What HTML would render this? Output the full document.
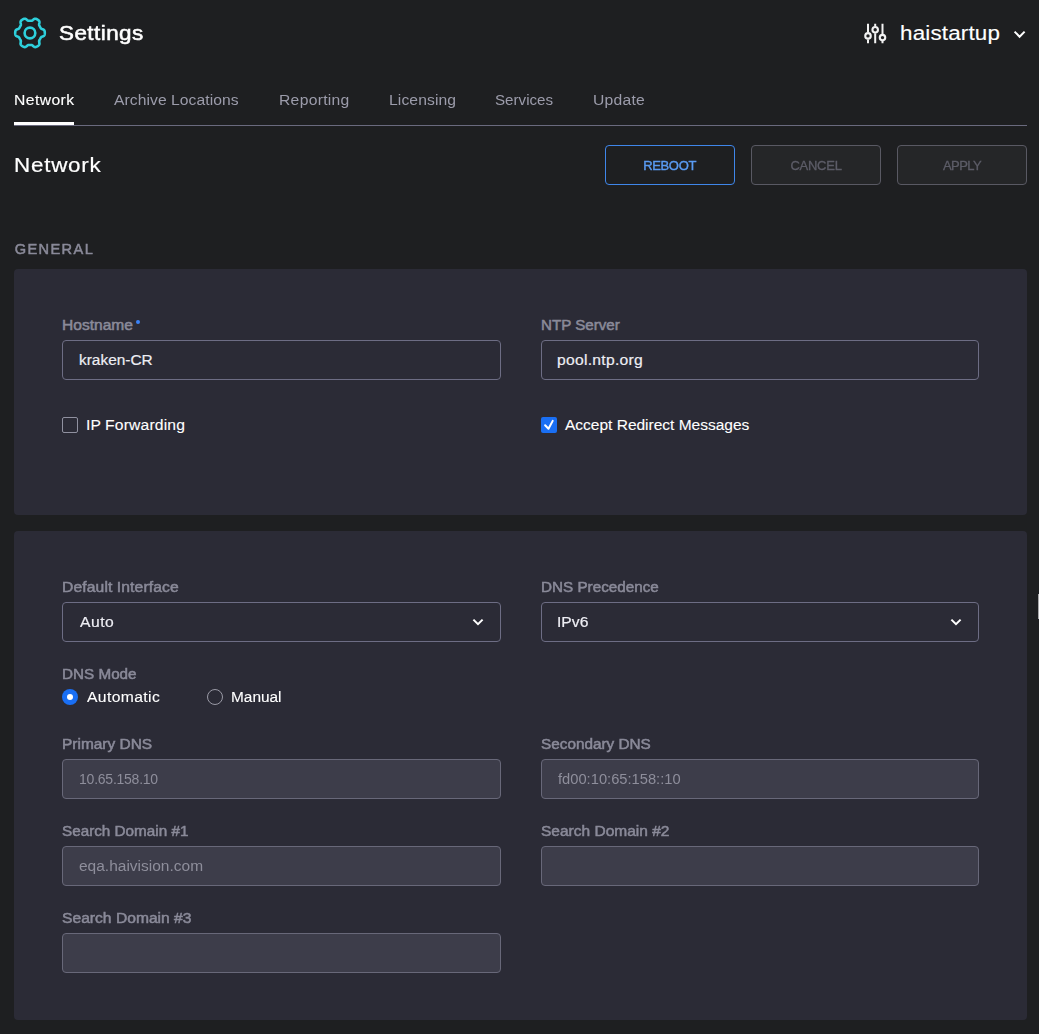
<!DOCTYPE html><html lang='en'><head><meta charset='utf-8'><title>Settings - Network</title><style>
*{box-sizing:border-box;margin:0;padding:0}
html,body{width:1039px;height:1034px;overflow:hidden;background:#1e1f21}
body{position:relative;font-family:"Liberation Sans",sans-serif;color:#fff}
.t{position:absolute;white-space:pre;transform-origin:0 0;display:block}
.panel{position:absolute;left:14px;width:1013px;background:#2b2b36;border-radius:4px}
.inp{position:absolute;height:40px;border:1px solid #6d6d84;border-radius:4px;background:#2b2b36}
.inp.dis{background:#3d3d4a;border-color:#686879}
.l{left:62px;width:439px} .r{left:541px;width:438px}
.btn{position:absolute;top:145px;width:130px;height:40px;border-radius:4px;border:1px solid #595963;background:#252628}
.btn.pri{border-color:#3f86ea;background:#1e1f21}
.cb{position:absolute;width:16px;height:16px;border-radius:2px;border:1px solid #9091a0;background:#2b2b36}
.cb.on{border:0;background:#1a6ff4}
.rd{position:absolute;width:16px;height:16px;border-radius:50%;border:1px solid #9a9aa6;background:#2b2b36}
.rd.on{border:0;background:#1a6ff4}
.rd.on:after{content:"";position:absolute;left:5px;top:5px;width:6px;height:6px;border-radius:50%;background:#fff}
svg{position:absolute;overflow:visible}
.gl{position:absolute;left:0;top:0;width:1039px;height:1034px;will-change:transform}
</style></head><body>
<svg width='1039' height='70' style='left:0;top:0' viewBox='0 0 1039 70' fill='none'><path d='M44.80 32.90 L44.80 32.63 L44.79 32.36 L44.77 32.09 L44.74 31.82 L44.70 31.56 L44.65 31.29 L44.59 31.03 L44.50 30.77 L44.39 30.52 L44.24 30.28 L44.05 30.05 L43.80 29.83 L43.50 29.64 L43.14 29.48 L42.75 29.33 L42.36 29.20 L42.00 29.07 L41.69 28.93 L41.43 28.79 L41.22 28.63 L41.04 28.47 L40.90 28.30 L40.77 28.12 L40.66 27.94 L40.55 27.76 L40.45 27.58 L40.35 27.39 L40.25 27.21 L40.15 27.02 L40.05 26.84 L39.94 26.66 L39.84 26.47 L39.74 26.29 L39.64 26.11 L39.54 25.92 L39.44 25.73 L39.35 25.54 L39.26 25.34 L39.19 25.12 L39.14 24.88 L39.12 24.61 L39.13 24.31 L39.18 23.96 L39.25 23.57 L39.33 23.15 L39.41 22.72 L39.45 22.31 L39.44 21.94 L39.39 21.61 L39.30 21.32 L39.17 21.07 L39.02 20.84 L38.85 20.63 L38.66 20.44 L38.47 20.27 L38.26 20.10 L38.05 19.94 L37.84 19.79 L37.62 19.64 L37.40 19.51 L37.17 19.37 L36.95 19.25 L36.71 19.13 L36.48 19.02 L36.24 18.92 L35.99 18.83 L35.74 18.76 L35.49 18.71 L35.22 18.68 L34.95 18.70 L34.66 18.76 L34.36 18.87 L34.05 19.06 L33.73 19.30 L33.42 19.58 L33.11 19.86 L32.82 20.12 L32.55 20.34 L32.31 20.50 L32.07 20.62 L31.85 20.69 L31.64 20.74 L31.43 20.76 L31.22 20.78 L31.01 20.78 L30.81 20.78 L30.61 20.78 L30.41 20.78 L30.20 20.78 L30.00 20.78 L29.80 20.78 L29.59 20.78 L29.39 20.78 L29.19 20.78 L28.99 20.78 L28.78 20.78 L28.57 20.76 L28.36 20.74 L28.15 20.69 L27.93 20.62 L27.69 20.50 L27.45 20.34 L27.18 20.12 L26.89 19.86 L26.58 19.58 L26.27 19.30 L25.95 19.06 L25.64 18.87 L25.34 18.76 L25.05 18.70 L24.78 18.68 L24.51 18.71 L24.26 18.76 L24.01 18.83 L23.76 18.92 L23.52 19.02 L23.29 19.13 L23.05 19.25 L22.83 19.37 L22.60 19.51 L22.38 19.64 L22.16 19.79 L21.95 19.94 L21.74 20.10 L21.53 20.27 L21.34 20.44 L21.15 20.63 L20.98 20.84 L20.83 21.07 L20.70 21.32 L20.61 21.61 L20.56 21.94 L20.55 22.31 L20.59 22.72 L20.67 23.15 L20.75 23.57 L20.82 23.96 L20.87 24.31 L20.88 24.61 L20.86 24.88 L20.81 25.12 L20.74 25.34 L20.65 25.54 L20.56 25.73 L20.46 25.92 L20.36 26.11 L20.26 26.29 L20.16 26.47 L20.06 26.66 L19.95 26.84 L19.85 27.02 L19.75 27.21 L19.65 27.39 L19.55 27.58 L19.45 27.76 L19.34 27.94 L19.23 28.12 L19.10 28.30 L18.96 28.47 L18.78 28.63 L18.57 28.79 L18.31 28.93 L18.00 29.07 L17.64 29.20 L17.25 29.33 L16.86 29.48 L16.50 29.64 L16.20 29.83 L15.95 30.05 L15.76 30.28 L15.61 30.52 L15.50 30.77 L15.41 31.03 L15.35 31.29 L15.30 31.56 L15.26 31.82 L15.23 32.09 L15.21 32.36 L15.20 32.63 L15.20 32.90 L15.20 33.17 L15.21 33.44 L15.23 33.71 L15.26 33.98 L15.30 34.24 L15.35 34.51 L15.41 34.77 L15.50 35.03 L15.61 35.28 L15.76 35.52 L15.95 35.75 L16.20 35.97 L16.50 36.16 L16.86 36.32 L17.25 36.47 L17.64 36.60 L18.00 36.73 L18.31 36.87 L18.57 37.01 L18.78 37.17 L18.96 37.33 L19.10 37.50 L19.23 37.68 L19.34 37.86 L19.45 38.04 L19.55 38.22 L19.65 38.41 L19.75 38.59 L19.85 38.78 L19.95 38.96 L20.06 39.14 L20.16 39.33 L20.26 39.51 L20.36 39.69 L20.46 39.88 L20.56 40.07 L20.65 40.26 L20.74 40.46 L20.81 40.68 L20.86 40.92 L20.88 41.19 L20.87 41.49 L20.82 41.84 L20.75 42.23 L20.67 42.65 L20.59 43.08 L20.55 43.49 L20.56 43.86 L20.61 44.19 L20.70 44.48 L20.83 44.73 L20.98 44.96 L21.15 45.17 L21.34 45.36 L21.53 45.53 L21.74 45.70 L21.95 45.86 L22.16 46.01 L22.38 46.16 L22.60 46.29 L22.83 46.43 L23.05 46.55 L23.29 46.67 L23.52 46.78 L23.76 46.88 L24.01 46.97 L24.26 47.04 L24.51 47.09 L24.78 47.12 L25.05 47.10 L25.34 47.04 L25.64 46.93 L25.95 46.74 L26.27 46.50 L26.58 46.22 L26.89 45.94 L27.18 45.68 L27.45 45.46 L27.69 45.30 L27.93 45.18 L28.15 45.11 L28.36 45.06 L28.57 45.04 L28.78 45.02 L28.99 45.02 L29.19 45.02 L29.39 45.02 L29.59 45.02 L29.80 45.02 L30.00 45.02 L30.20 45.02 L30.41 45.02 L30.61 45.02 L30.81 45.02 L31.01 45.02 L31.22 45.02 L31.43 45.04 L31.64 45.06 L31.85 45.11 L32.07 45.18 L32.31 45.30 L32.55 45.46 L32.82 45.68 L33.11 45.94 L33.42 46.22 L33.73 46.50 L34.05 46.74 L34.36 46.93 L34.66 47.04 L34.95 47.10 L35.22 47.12 L35.49 47.09 L35.74 47.04 L35.99 46.97 L36.24 46.88 L36.48 46.78 L36.71 46.67 L36.95 46.55 L37.17 46.43 L37.40 46.29 L37.62 46.16 L37.84 46.01 L38.05 45.86 L38.26 45.70 L38.47 45.53 L38.66 45.36 L38.85 45.17 L39.02 44.96 L39.17 44.73 L39.30 44.48 L39.39 44.19 L39.44 43.86 L39.45 43.49 L39.41 43.08 L39.33 42.65 L39.25 42.23 L39.18 41.84 L39.13 41.49 L39.12 41.19 L39.14 40.92 L39.19 40.68 L39.26 40.46 L39.35 40.26 L39.44 40.07 L39.54 39.88 L39.64 39.69 L39.74 39.51 L39.84 39.33 L39.94 39.14 L40.05 38.96 L40.15 38.78 L40.25 38.59 L40.35 38.41 L40.45 38.22 L40.55 38.04 L40.66 37.86 L40.77 37.68 L40.90 37.50 L41.04 37.33 L41.22 37.17 L41.43 37.01 L41.69 36.87 L42.00 36.73 L42.36 36.60 L42.75 36.47 L43.14 36.32 L43.50 36.16 L43.80 35.97 L44.05 35.75 L44.24 35.52 L44.39 35.28 L44.50 35.03 L44.59 34.77 L44.65 34.51 L44.70 34.24 L44.74 33.98 L44.77 33.71 L44.79 33.44 L44.80 33.17 Z' stroke='#2ed0dc' stroke-width='2.6' stroke-linejoin='round'/><circle cx='29.95' cy='33.0' r='5.35' stroke='#2ed0dc' stroke-width='2.6'/><g stroke='#f2f2f2' stroke-width='2' stroke-linecap='butt'><path d='M868 23.7V32.4M868 39.4V43.2M875.2 23.7V26.3M875.2 33.3V43.2M882.5 23.7V34.1M882.5 41.1V43.2'/><circle cx='868' cy='35.9' r='2.75' stroke-width='2.1'/><circle cx='875.2' cy='29.8' r='2.75' stroke-width='2.1'/><circle cx='882.5' cy='37.6' r='2.75' stroke-width='2.1'/></g><path d='M1014.6 31.6L1019.6 36.8L1024.6 31.6' stroke='#fff' stroke-width='2' /></svg>
<div style='position:absolute;left:14px;top:125px;width:1013px;height:1px;background:#6a6a7e'></div>
<div style='position:absolute;left:14px;top:122px;width:60px;height:3px;background:#fff'></div>
<div class='btn pri' style='left:605px'></div><div class='btn' style='left:751px'></div><div class='btn' style='left:897px'></div>
<div class='panel' style='top:269px;height:246px'></div>
<div class='panel' style='top:531px;height:489px'></div>
<div class='inp l' style='top:340px'></div>
<div class='inp r' style='top:340px'></div>
<div class='inp l' style='top:602px'></div>
<div class='inp r' style='top:602px'></div>
<div class='inp dis l' style='top:759px'></div>
<div class='inp dis r' style='top:759px'></div>
<div class='inp dis l' style='top:846px'></div>
<div class='inp dis r' style='top:846px'></div>
<div class='inp dis l' style='top:933px'></div>
<div class='cb' style='left:62px;top:417px'></div><div class='cb on' style='left:541px;top:417px'></div>
<div class='rd on' style='left:62px;top:689px'></div><div class='rd' style='left:207px;top:689px'></div>
<svg width='1039' height='1034' style='left:0;top:0;pointer-events:none' viewBox='0 0 1039 1034' fill='none' stroke='#fff' stroke-width='2'><path d='M473.4 619.6L478 624.2L482.6 619.6'/><path d='M951.4 619.6L956 624.2L960.6 619.6'/><path d='M545.1 425.2L548.5 428.8L552.7 420.9' stroke-width='2' stroke-linecap='round' stroke-linejoin='round'/></svg>
<div style='position:absolute;left:136.4px;top:320.2px;width:3.8px;height:3.8px;border-radius:50%;background:#3b82f6'></div>
<div style='position:absolute;left:1038px;top:594px;width:1px;height:25px;background:#a9a9ab'></div>
<span class='t' style='left:900.33px;top:23px;font-size:20px;line-height:20px;font-weight:400;color:#ffffff;letter-spacing:0.156px;transform:scaleX(1.1200);-webkit-text-stroke:0.15px #ffffff;'>haistartup</span>
<span class='t' style='left:62.10px;top:318px;font-size:14px;line-height:14px;font-weight:400;color:#8a8a99;letter-spacing:-0.000px;transform:scaleX(1.1116);-webkit-text-stroke:0.5px #8a8a99;'>Hostname</span>
<span class='t' style='left:540.74px;top:318px;font-size:14px;line-height:14px;font-weight:400;color:#8a8a99;letter-spacing:0.000px;word-spacing:-0.000px;transform:scaleX(1.0813);-webkit-text-stroke:0.5px #8a8a99;'>NTP Server</span>
<span class='t' style='left:78.83px;top:353px;font-size:14px;line-height:14px;font-weight:400;color:#eeeef4;letter-spacing:0.000px;transform:scaleX(1.1013);-webkit-text-stroke:0.18px #eeeef4;'>kraken-CR</span>
<span class='t' style='left:557.30px;top:353px;font-size:14px;line-height:14px;font-weight:400;color:#eeeef4;letter-spacing:0.233px;transform:scaleX(1.1200);-webkit-text-stroke:0.18px #eeeef4;'>pool.ntp.org</span>
<span class='t' style='left:85.98px;top:418px;font-size:14px;line-height:14px;font-weight:400;color:#ffffff;letter-spacing:0.138px;word-spacing:-0.206px;transform:scaleX(1.1200);-webkit-text-stroke:0.1px #ffffff;'>IP Forwarding</span>
<span class='t' style='left:564.65px;top:418px;font-size:14px;line-height:14px;font-weight:400;color:#ffffff;letter-spacing:0.000px;word-spacing:-0.000px;transform:scaleX(1.1070);-webkit-text-stroke:0.1px #ffffff;'>Accept Redirect Messages</span>
<div class='gl'>
<span class='t' style='left:59.09px;top:23px;font-size:20px;line-height:20px;font-weight:400;color:#ffffff;letter-spacing:0.415px;transform:scaleX(1.1200);-webkit-text-stroke:0.55px #ffffff;'>Settings</span>
<span class='t' style='left:13.70px;top:93px;font-size:14px;line-height:14px;font-weight:400;color:#ffffff;letter-spacing:0.388px;transform:scaleX(1.1200);-webkit-text-stroke:0.12px #ffffff;'>Network</span>
<span class='t' style='left:114.31px;top:93px;font-size:14px;line-height:14px;font-weight:400;color:#9c9cab;letter-spacing:0.050px;word-spacing:-0.075px;transform:scaleX(1.1200);'>Archive Locations</span>
<span class='t' style='left:278.77px;top:93px;font-size:14px;line-height:14px;font-weight:400;color:#9c9cab;letter-spacing:0.263px;transform:scaleX(1.1200);'>Reporting</span>
<span class='t' style='left:388.97px;top:93px;font-size:14px;line-height:14px;font-weight:400;color:#9c9cab;letter-spacing:0.090px;transform:scaleX(1.1200);'>Licensing</span>
<span class='t' style='left:494.72px;top:93px;font-size:14px;line-height:14px;font-weight:400;color:#9c9cab;letter-spacing:0.000px;transform:scaleX(1.0825);'>Services</span>
<span class='t' style='left:593.10px;top:93px;font-size:14px;line-height:14px;font-weight:400;color:#9c9cab;letter-spacing:0.218px;transform:scaleX(1.1200);'>Update</span>
<span class='t' style='left:14.18px;top:155px;font-size:20px;line-height:20px;font-weight:400;color:#ffffff;letter-spacing:0.675px;transform:scaleX(1.1200);-webkit-text-stroke:0.2px #ffffff;'>Network</span>
<span class='t' style='left:643.14px;top:159px;font-size:13px;line-height:13px;font-weight:400;color:#5a9bf2;letter-spacing:-0.329px;-webkit-text-stroke:0.4px #5a9bf2;'>REBOOT</span>
<span class='t' style='left:790.43px;top:159px;font-size:13px;line-height:13px;font-weight:400;color:#5d5d68;letter-spacing:-0.260px;-webkit-text-stroke:0.3px #5d5d68;'>CANCEL</span>
<span class='t' style='left:942.95px;top:159px;font-size:13px;line-height:13px;font-weight:400;color:#5d5d68;letter-spacing:-0.553px;-webkit-text-stroke:0.3px #5d5d68;'>APPLY</span>
<span class='t' style='left:14.75px;top:242px;font-size:14.6px;line-height:15px;font-weight:400;color:#8a8a99;letter-spacing:1.375px;-webkit-text-stroke:0.5px #8a8a99;'>GENERAL</span>
<span class='t' style='left:62.10px;top:580px;font-size:14px;line-height:14px;font-weight:400;color:#8a8a99;letter-spacing:0.104px;word-spacing:-0.156px;transform:scaleX(1.1200);-webkit-text-stroke:0.5px #8a8a99;'>Default Interface</span>
<span class='t' style='left:540.73px;top:580px;font-size:14px;line-height:14px;font-weight:400;color:#8a8a99;letter-spacing:0.000px;word-spacing:-0.000px;transform:scaleX(1.0887);-webkit-text-stroke:0.5px #8a8a99;'>DNS Precedence</span>
<span class='t' style='left:79.98px;top:615px;font-size:14px;line-height:14px;font-weight:400;color:#eeeef4;letter-spacing:0.429px;transform:scaleX(1.1200);-webkit-text-stroke:0.18px #eeeef4;'>Auto</span>
<span class='t' style='left:557.21px;top:615px;font-size:14px;line-height:14px;font-weight:400;color:#eeeef4;letter-spacing:0.016px;transform:scaleX(1.1200);-webkit-text-stroke:0.18px #eeeef4;'>IPv6</span>
<span class='t' style='left:61.93px;top:667px;font-size:14px;line-height:14px;font-weight:400;color:#8a8a99;letter-spacing:0.000px;word-spacing:-0.000px;transform:scaleX(1.0890);-webkit-text-stroke:0.5px #8a8a99;'>DNS Mode</span>
<span class='t' style='left:87.15px;top:690px;font-size:14px;line-height:14px;font-weight:400;color:#ffffff;letter-spacing:0.342px;transform:scaleX(1.1200);-webkit-text-stroke:0.1px #ffffff;'>Automatic</span>
<span class='t' style='left:231.42px;top:690px;font-size:14px;line-height:14px;font-weight:400;color:#ffffff;letter-spacing:0.000px;transform:scaleX(1.1004);-webkit-text-stroke:0.1px #ffffff;'>Manual</span>
<span class='t' style='left:62.12px;top:737px;font-size:14px;line-height:14px;font-weight:400;color:#8a8a99;letter-spacing:-0.000px;word-spacing:0.000px;transform:scaleX(1.1041);-webkit-text-stroke:0.5px #8a8a99;'>Primary DNS</span>
<span class='t' style='left:541.41px;top:737px;font-size:14px;line-height:14px;font-weight:400;color:#8a8a99;letter-spacing:0.000px;word-spacing:-0.000px;transform:scaleX(1.0941);-webkit-text-stroke:0.5px #8a8a99;'>Secondary DNS</span>
<span class='t' style='left:79.07px;top:772px;font-size:14px;line-height:14px;font-weight:400;color:#8e8e9b;letter-spacing:-0.242px;'>10.65.158.10</span>
<span class='t' style='left:558.37px;top:772px;font-size:14px;line-height:14px;font-weight:400;color:#8e8e9b;letter-spacing:0.000px;transform:scaleX(1.0502);'>fd00:10:65:158::10</span>
<span class='t' style='left:61.81px;top:824px;font-size:14px;line-height:14px;font-weight:400;color:#8a8a99;letter-spacing:0.000px;word-spacing:-0.000px;transform:scaleX(1.0899);-webkit-text-stroke:0.5px #8a8a99;'>Search Domain #1</span>
<span class='t' style='left:541.40px;top:824px;font-size:14px;line-height:14px;font-weight:400;color:#8a8a99;letter-spacing:0.000px;word-spacing:-0.000px;transform:scaleX(1.1082);-webkit-text-stroke:0.5px #8a8a99;'>Search Domain #2</span>
<span class='t' style='left:79.46px;top:859px;font-size:14px;line-height:14px;font-weight:400;color:#8e8e9b;letter-spacing:-0.000px;transform:scaleX(1.1071);'>eqa.haivision.com</span>
<span class='t' style='left:61.80px;top:911px;font-size:14px;line-height:14px;font-weight:400;color:#8a8a99;letter-spacing:0.000px;word-spacing:-0.000px;transform:scaleX(1.1170);-webkit-text-stroke:0.5px #8a8a99;'>Search Domain #3</span>
</div>
</body></html>
